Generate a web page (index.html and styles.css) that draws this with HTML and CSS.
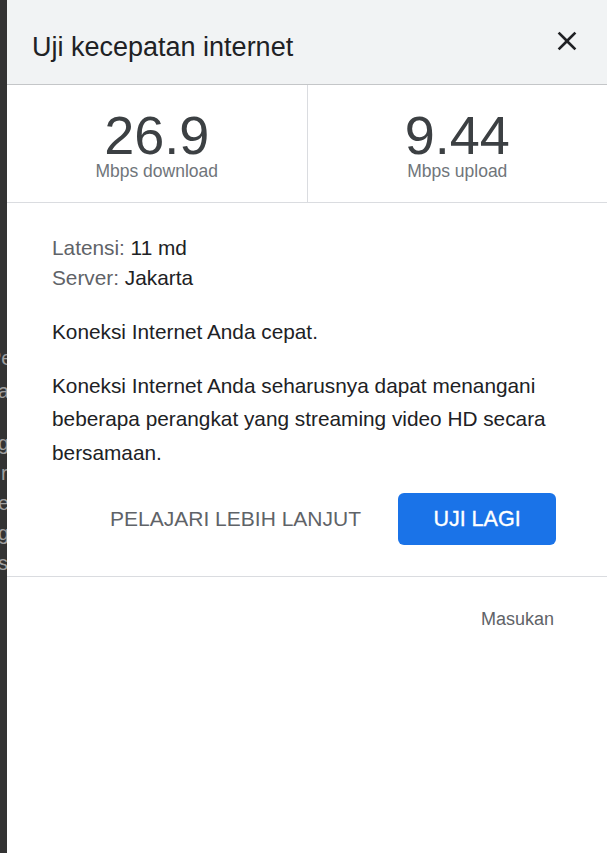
FILE: index.html
```html
<!DOCTYPE html>
<html lang="id">
<head>
<meta charset="utf-8">
<title>Uji kecepatan internet</title>
<link rel="stylesheet" href="styles.css">
</head>
<body>
<div class="page">
  <div class="strip">
    <div class="strip-group first">
      <div class="pe">Pe</div>
      <div>a</div>
    </div>
    <div class="strip-group second">
      <div>g</div>
      <div class="r">r</div>
      <div>e</div>
      <div>g</div>
      <div>s</div>
    </div>
  </div>
  <div class="dialog">
    <div class="header">
      <h1 class="title">Uji kecepatan internet</h1>
      <svg class="close" viewBox="0 0 24 24" aria-label="Tutup"><path d="M19 6.41L17.59 5 12 10.59 6.41 5 5 6.41 10.59 12 5 17.59 6.41 19 12 13.41 17.59 19 19 17.59 13.41 12z"/></svg>
    </div>
    <div class="stats">
      <div class="stat">
        <div class="num">26.9</div>
        <div class="unit">Mbps download</div>
      </div>
      <div class="stat">
        <div class="num">9.44</div>
        <div class="unit">Mbps upload</div>
      </div>
    </div>
    <div class="content">
      <div class="meta">
        <div><span class="label">Latensi:</span> 11 md</div>
        <div><span class="label">Server:</span> Jakarta</div>
      </div>
      <p class="p1">Koneksi Internet Anda cepat.</p>
      <p class="p2">Koneksi Internet Anda seharusnya dapat menangani beberapa perangkat yang streaming video HD secara bersamaan.</p>
      <div class="actions">
        <span class="link">PELAJARI LEBIH LANJUT</span>
        <button class="btn">UJI LAGI</button>
      </div>
    </div>
    <div class="footer">
      <span class="feedback">Masukan</span>
    </div>
  </div>
</div>
</body>
</html>
```

FILE: styles.css
```css
html, body {
  margin: 0;
  padding: 0;
  background: #ffffff;
}

body {
  font-family: "Liberation Sans", Arial, sans-serif;
}

.page {
  display: flex;
  min-height: 853px;
}

.strip {
  width: 7px;
  flex: none;
  background: #333333;
  overflow: hidden;
  color: #a0a0a0;
  font-size: 20px;
  white-space: nowrap;
}

.strip-group.first {
  padding-top: 342px;
  line-height: 33px;
}

.strip-group.second {
  margin-top: 20px;
  line-height: 30px;
}

.strip-group div {
  margin-left: -2px;
}

.strip-group .pe {
  margin-left: -12px;
}

.strip-group .r {
  margin-left: 1px;
}

.dialog {
  flex: 1;
  background: #ffffff;
}

.header {
  height: 85px;
  box-sizing: border-box;
  background: #f1f3f4;
  border-bottom: 1px solid #c4c6c8;
  display: flex;
  justify-content: space-between;
  align-items: flex-start;
  padding: 0 24px 0 25px;
}

.title {
  margin: 32px 0 0;
  font-size: 27px;
  line-height: 31px;
  font-weight: 400;
  color: #202124;
}

.close {
  margin-top: 25px;
  width: 32px;
  height: 32px;
  fill: #202124;
}

.stats {
  display: flex;
  border-bottom: 1px solid #dadce0;
}

.stat {
  flex: 1;
  text-align: center;
  padding: 22px 0 24px;
}

.stat + .stat {
  border-left: 1px solid #dadce0;
}

.num {
  font-size: 54px;
  line-height: 56px;
  color: #3c4043;
}

.unit {
  margin-top: 1px;
  font-size: 17.5px;
  line-height: 14px;
  color: #70757a;
}

.content {
  padding: 30px 51px 0 45px;
  font-size: 20.8px;
  color: #202124;
}

.meta {
  line-height: 30px;
}

.label {
  color: #5f6368;
}

.p1 {
  margin: 22px -25px 0 0;
  line-height: 33.5px;
}

.p2 {
  margin: 20px -25px 0 0;
  line-height: 33.5px;
}

.actions {
  display: flex;
  justify-content: flex-end;
  align-items: center;
  gap: 37px;
  margin-top: 24px;
}

.link {
  font-size: 21px;
  color: #5f6368;
}

.btn {
  width: 158px;
  height: 52px;
  border: none;
  border-radius: 6px;
  background: #1a73e8;
  color: #ffffff;
  font-family: "Liberation Sans", Arial, sans-serif;
  font-size: 21.5px;
  -webkit-text-stroke: 0.35px #ffffff;
  padding: 0;
  display: flex;
  align-items: center;
  justify-content: center;
}

.footer {
  margin-top: 31px;
  border-top: 1px solid #dadce0;
  padding: 30px 53px 0 0;
  text-align: right;
  line-height: 24px;
}

.feedback {
  font-size: 18px;
  color: #5f6368;
}
```
